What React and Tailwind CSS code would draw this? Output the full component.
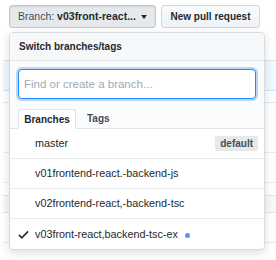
import React from "react";

const branches = [
  { name: "master", isDefault: true },
  { name: "v01frontend-react.-backend-js" },
  { name: "v02frontend-react,-backend-tsc" },
  { name: "v03front-react,backend-tsc-ex", selected: true, dot: true },
];

function CheckIcon() {
  return (
    <svg width="11" height="11" viewBox="0 0 12 12" className="block">
      <path d="M1 6.4 L4.2 9.6 L11 2.6" fill="none" stroke="#24292e" strokeWidth="1.7" />
    </svg>
  );
}

export default function App() {
  return (
    <div className="relative h-[260px] w-[276px] overflow-hidden bg-white text-[#24292e] font-['Liberation_Sans',Arial,sans-serif]">
      {/* Buttons row */}
      <div className="flex gap-[5px] pl-[9px] pt-[5px]">
        <button className="flex h-[23px] w-[147px] items-center rounded-[3px] border border-[#c4c7ca] bg-[#e6e9ec] pl-[8px] text-[10.5px] shadow-[inset_0_1px_2px_rgba(27,31,35,0.12)]">
          <span className="text-[#444d56]">Branch:&nbsp;</span>
          <span className="font-bold">v03front-react...</span>
          <span className="ml-[5px] mt-[1px] h-0 w-0 border-x-[3.5px] border-t-[4px] border-x-transparent border-t-[#24292e]" />
        </button>
        <button className="flex h-[23px] w-[99px] items-center justify-center rounded-[3px] border border-[#d1d5da] bg-gradient-to-b from-[#fafbfc] to-[#eff3f6] text-[10px] font-bold">
          New pull request
        </button>
      </div>

      {/* Page content behind the menu */}
      <div className="relative mt-[4px] pt-[28px]">
        <div className="ml-[3px] mr-[-20px] border border-l-0 border-[#e1e4e8]">
          <div className="h-[30px] border-b border-[#c8e1ff] bg-[#f1f8ff]" />
          <div className="h-[12px] border-b border-[#e1e4e8]" />
          <div className="h-[50px] border-b border-[#eaecef]" />
          <div className="h-[30px] border-b border-[#eaecef]" />
          <div className="h-[12px]" />
          <div className="h-[18px] border-y border-[#e1e4e8] bg-[#f6f8fa]" />
          <div className="h-[30px] border-b border-[#eaecef]" />
          <div className="h-[30px]" />
        </div>

        {/* Branch select menu */}
        <div className="absolute left-[9px] top-0 w-[256px] overflow-hidden rounded-[4px] border border-[#d8dce0] bg-white shadow-[0_3px_10px_rgba(27,31,35,0.15)]">
          <div className="flex h-[28px] items-center border-b border-[#e1e4e8] bg-[#f6f8fa] px-[9px] text-[10px] font-bold">
            Switch branches/tags
          </div>
          <div className="bg-[#fafbfc] pt-[8px]">
            <div className="px-[8px]">
              <input
                type="text"
                placeholder="Find or create a branch..."
                className="block h-[30px] w-full rounded-[4px] border border-[#2188ff] bg-white px-[5px] text-[11.5px] shadow-[0_0_0_2px_rgba(3,102,214,0.25)] outline-none placeholder:text-[#a3aab1]"
              />
            </div>
            <div className="mt-[10px] flex border-b border-[#e1e4e8] px-[8px]">
              <div className="-mb-px flex h-[20px] w-[58px] items-center justify-center rounded-t-[3px] border border-[#e1e4e8] border-b-white bg-white text-[10px] font-bold">
                Branches
              </div>
              <div className="flex h-[19px] items-center pl-[11px] text-[10px] font-bold text-[#444d56]">
                Tags
              </div>
            </div>
          </div>
          <ul>
            {branches.map((b, i) => (
              <li
                key={b.name}
                className={`flex h-[30px] items-center pl-[8px] pr-[6px] text-[10.8px] ${
                  i < branches.length - 1 ? "border-b border-[#eaecef]" : ""
                }`}
              >
                <span className="flex w-[17px] justify-start">
                  {b.selected && <CheckIcon />}
                </span>
                <span>{b.name}</span>
                {b.dot && (
                  <span className="ml-[7px] mt-[2px] h-[5px] w-[5px] rounded-full bg-[#5a95ee]" />
                )}
                {b.isDefault && (
                  <span className="ml-auto flex h-[15px] items-center rounded-[2px] bg-[#e6e8eb] px-[5px] text-[10px] font-bold text-[#444d56]">
                    default
                  </span>
                )}
              </li>
            ))}
          </ul>
        </div>
      </div>
    </div>
  );
}
